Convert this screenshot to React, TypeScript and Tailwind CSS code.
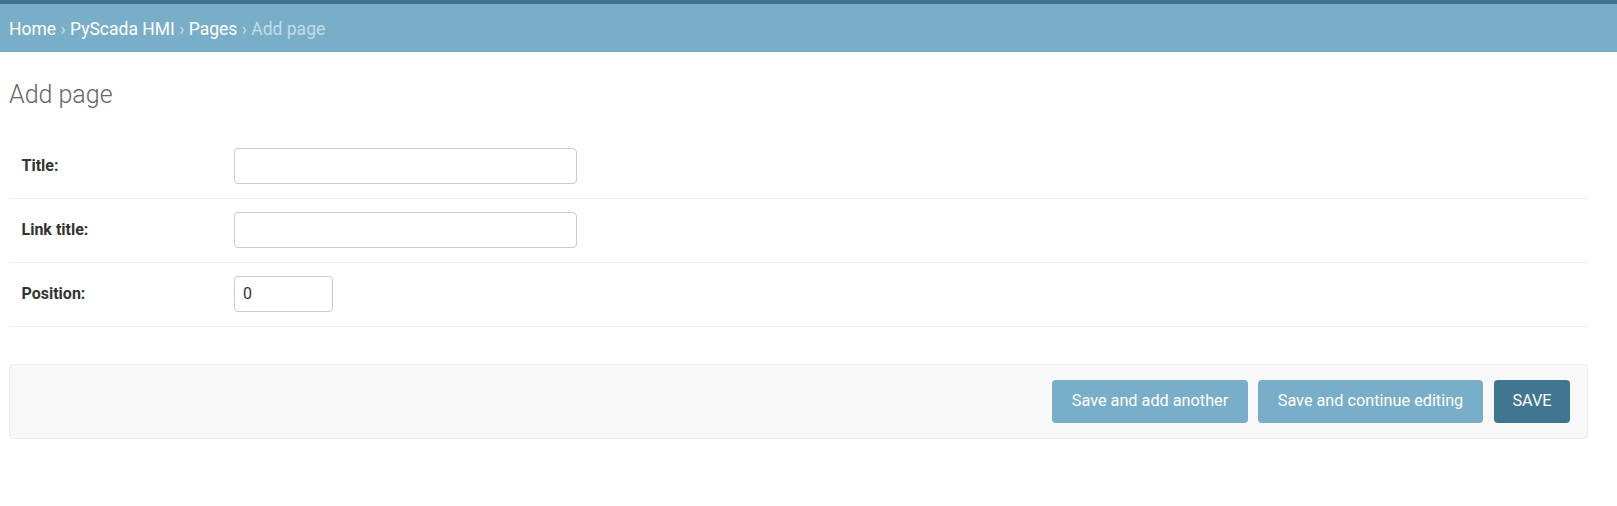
import React from "react";

export default function App() {
  const rows = [
    { label: "Title:", w: "w-[343px]", value: "" },
    { label: "Link title:", w: "w-[343px]", value: "" },
    { label: "Position:", w: "w-[99px]", value: "0" },
  ];
  return (
    <div className="w-[1617px] h-[506px] bg-white font-['Roboto',_'Liberation_Sans',_sans-serif] overflow-hidden">
      <div className="h-[4px] bg-[#417690]" />
      <div className="h-[48px] bg-[#79aec8] pl-[9px] pt-[2px] flex items-center text-[17.5px] leading-[22px] text-white">
        <span>Home</span>
        <span className="text-[#c4dce8]">&nbsp;›&nbsp;</span>
        <span>PyScada HMI</span>
        <span className="text-[#c4dce8]">&nbsp;›&nbsp;</span>
        <span>Pages</span>
        <span className="text-[#c4dce8]">&nbsp;›&nbsp;Add page</span>
      </div>
      <div className="pl-[9px] pr-[29px]">
        <h1 className="mt-[27.5px] text-[25px] leading-[30px] font-light text-[#666]">Add page</h1>
        <div className="mt-[25px]">
          {rows.map((r) => (
            <div key={r.label} className="flex items-center pt-[13px] pb-[14px] border-b border-[#eee]">
              <label className="w-[225px] pl-[12.5px] text-[16px] font-bold text-[#333]">{r.label}</label>
              <input
                readOnly
                value={r.value}
                className={`${r.w} h-[36px] border border-[#ccc] rounded-[4px] px-[8px] text-[16px] text-[#333] bg-white outline-none`}
              />
            </div>
          ))}
        </div>
        <div className="mt-[37px] h-[75px] bg-[#f8f8f8] border border-[#eee] rounded-[4px] flex justify-end items-start pt-[15px] pr-[17px]">
          <button className="w-[196px] h-[43px] rounded-[4px] bg-[#79aec8] text-white text-[16.25px]">Save and add another</button>
          <button className="ml-[10px] w-[225px] h-[43px] rounded-[4px] bg-[#79aec8] text-white text-[16.25px]">Save and continue editing</button>
          <button className="ml-[11px] w-[76px] h-[43px] rounded-[4px] bg-[#417690] text-white text-[16.25px]">SAVE</button>
        </div>
      </div>
    </div>
  );
}
